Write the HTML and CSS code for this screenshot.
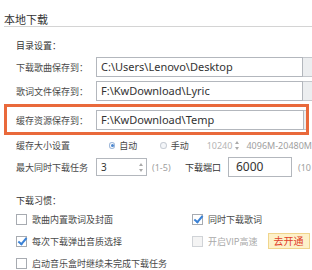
FILE: index.html
```html
<!DOCTYPE html>
<html lang="zh-CN">
<head>
  <meta charset="UTF-8">
  <title>本地下载</title>
  <link rel="stylesheet" href="styles.css">
</head>
<body>
  <div class="panel">
    <div class="title">本地下载</div>

    <div class="group">
      <div class="subhead">目录设置：</div>

      <div class="row">
        <span class="label">下载歌曲保存到：</span>
        <span class="path">C:\Users\Lenovo\Desktop</span>
        <span class="browse"></span>
      </div>

      <div class="row">
        <span class="label">歌词文件保存到：</span>
        <span class="path">F:\KwDownload\Lyric</span>
        <span class="browse"></span>
      </div>

      <div class="highlight">
        <div class="row">
          <span class="label">缓存资源保存到：</span>
          <span class="path">F:\KwDownload\Temp</span>
          <span class="browse"></span>
        </div>
      </div>

      <div class="row row-small">
        <span class="label">缓存大小设置</span>
        <span class="radio checked"></span>
        <span class="opt">自动</span>
        <span class="radio"></span>
        <span class="opt last">手动</span>
        <span class="spin disabled">10240<span class="arrows"></span></span>
        <span class="hint">4096M-20480M</span>
      </div>

      <div class="row">
        <span class="label">最大同时下载任务</span>
        <span class="spin num">3<span class="arrows"></span></span>
        <span class="hint range">(1-5)</span>
        <span class="port-label">下载端口</span>
        <span class="port">6000</span>
        <span class="hint">(10</span>
      </div>

      <div class="subhead habits">下载习惯：</div>

      <div class="checks">
        <label class="check"><span class="box"></span>歌曲内置歌词及封面</label>
        <label class="check"><span class="box on"></span>同时下载歌词</label>
        <label class="check"><span class="box on"></span>每次下载弹出音质选择</label>
        <label class="check off"><span class="box"></span>开启VIP高速<span class="vip">去开通</span></label>
        <label class="check wide"><span class="box"></span>启动音乐盒时继续未完成下载任务</label>
      </div>
    </div>
  </div>
</body>
</html>
```

FILE: styles.css
```css
body {
  margin: 0;
  background-color: white;
  font-family: "Noto Sans CJK SC", "Noto Sans", sans-serif;
  font-size: 9px;
  color: #484848;
  overflow: hidden;
  width: 312px;
  height: 270px;
}

.panel {
  padding-left: 4px;
}

.title {
  padding-top: 12px;
  line-height: 14px;
  height: 14px;
  font-size: 11px;
  color: #333;
  border-bottom: 1px solid #d4d4d4;
}

.group {
  padding-left: 12px;
}

.subhead {
  margin-top: 12px;
  line-height: 14px;
  color: #333;
}

.habits {
  margin-top: 17px;
}

.row {
  display: flex;
  align-items: center;
  height: 20px;
  margin-top: 4px;
  white-space: nowrap;
}

.label {
  width: 80px;
  flex-shrink: 0;
}

.path {
  box-sizing: border-box;
  width: 207px;
  height: 20px;
  flex-shrink: 0;
  border: 1px solid #b3b7bd;
  padding-left: 4px;
  font-family: "Noto Sans", sans-serif;
  font-size: 11px;
  line-height: 18px;
  color: #333;
}

.browse {
  width: 20px;
  height: 20px;
  flex-shrink: 0;
  box-sizing: border-box;
  border: 1px solid #c4c7cc;
  border-left: none;
  background-color: #eceef0;
}

/* orange frame drawn round the cache row */
.highlight {
  margin: 3px 0 0 -12px;
  width: 290px;
  border: 3px solid #e9693b;
  padding: 0 0 2px 9px;
  overflow: hidden;
}

.highlight .row {
  margin-top: 3px;
}

.highlight .path {
  width: 208px;
}

.row-small {
  height: 16px;
  margin-top: 2px;
}

.radio {
  width: 7px;
  height: 7px;
  border-radius: 50%;
  border: 1px solid #c9ced6;
  background-color: #f4f6f9;
  box-sizing: border-box;
  margin-right: 4px;
  position: relative;
}

.radio.checked {
  margin-left: 13px;
  border-color: #9fb8d9;
  background-color: #fff;
}

.radio.checked::after {
  content: "";
  position: absolute;
  left: 1px;
  top: 1px;
  width: 3px;
  height: 3px;
  border-radius: 50%;
  background-color: #4a86cf;
}

.opt {
  margin-right: 23px;
}

.opt.last {
  margin-right: 18px;
}

.spin {
  box-sizing: border-box;
  height: 16px;
  display: flex;
  align-items: center;
  justify-content: space-between;
  font-family: "Noto Sans", sans-serif;
  padding: 0 3px 0 4px;
}

.spin.disabled {
  width: 44px;
  color: #b5b5b5;
  font-size: 9px;
  padding: 0 6px 0 0;
  margin-right: 1px;
}

.spin.num {
  width: 51px;
  height: 18px;
  border: 1px solid #b3b7bd;
  font-size: 10px;
  color: #333;
}

.arrows {
  width: 4px;
  height: 9px;
  flex-shrink: 0;
  position: relative;
}

.arrows::before,
.arrows::after {
  content: "";
  position: absolute;
  left: 0;
  border-left: 2px solid transparent;
  border-right: 2px solid transparent;
}

.arrows::before {
  top: 0;
  border-bottom: 3px solid #aaa;
}

.arrows::after {
  bottom: 0;
  border-top: 3px solid #aaa;
}

.hint {
  color: #a0a0a0;
  font-family: "Noto Sans", sans-serif;
  font-size: 9px;
}

.range {
  margin-left: 5px;
  width: 33px;
}

.port-label {
  width: 43px;
  color: #333;
}

.port {
  box-sizing: border-box;
  width: 64px;
  height: 20px;
  border: 1px solid #b3b7bd;
  padding-left: 7px;
  font-family: "Noto Sans", sans-serif;
  font-size: 12px;
  line-height: 18px;
  color: #333;
  margin-right: 6px;
}

.checks {
  display: grid;
  grid-template-columns: 176px auto;
  grid-auto-rows: 22px;
}

.check {
  display: flex;
  align-items: center;
  white-space: nowrap;
}

.check.wide {
  grid-column: 1 / 3;
}

.check.off {
  color: #aaa;
}

.box {
  box-sizing: border-box;
  width: 11px;
  height: 11px;
  border: 1px solid #a7abb1;
  background-color: white;
  margin-right: 5px;
  position: relative;
}

.check.off .box {
  border-color: #d0d3d7;
  background-color: #f4f4f4;
}

.box.on::after {
  content: "";
  position: absolute;
  left: 3px;
  top: -1px;
  width: 3px;
  height: 7px;
  border-right: 2px solid #3b82d6;
  border-bottom: 2px solid #3b82d6;
  transform: rotate(40deg);
}

.vip {
  margin-left: 10px;
  padding: 0 5px;
  height: 14px;
  line-height: 14px;
  font-size: 10px;
  color: #e0402a;
  background-color: #fdf1c9;
  border: 1px solid #f0d58c;
}
```
